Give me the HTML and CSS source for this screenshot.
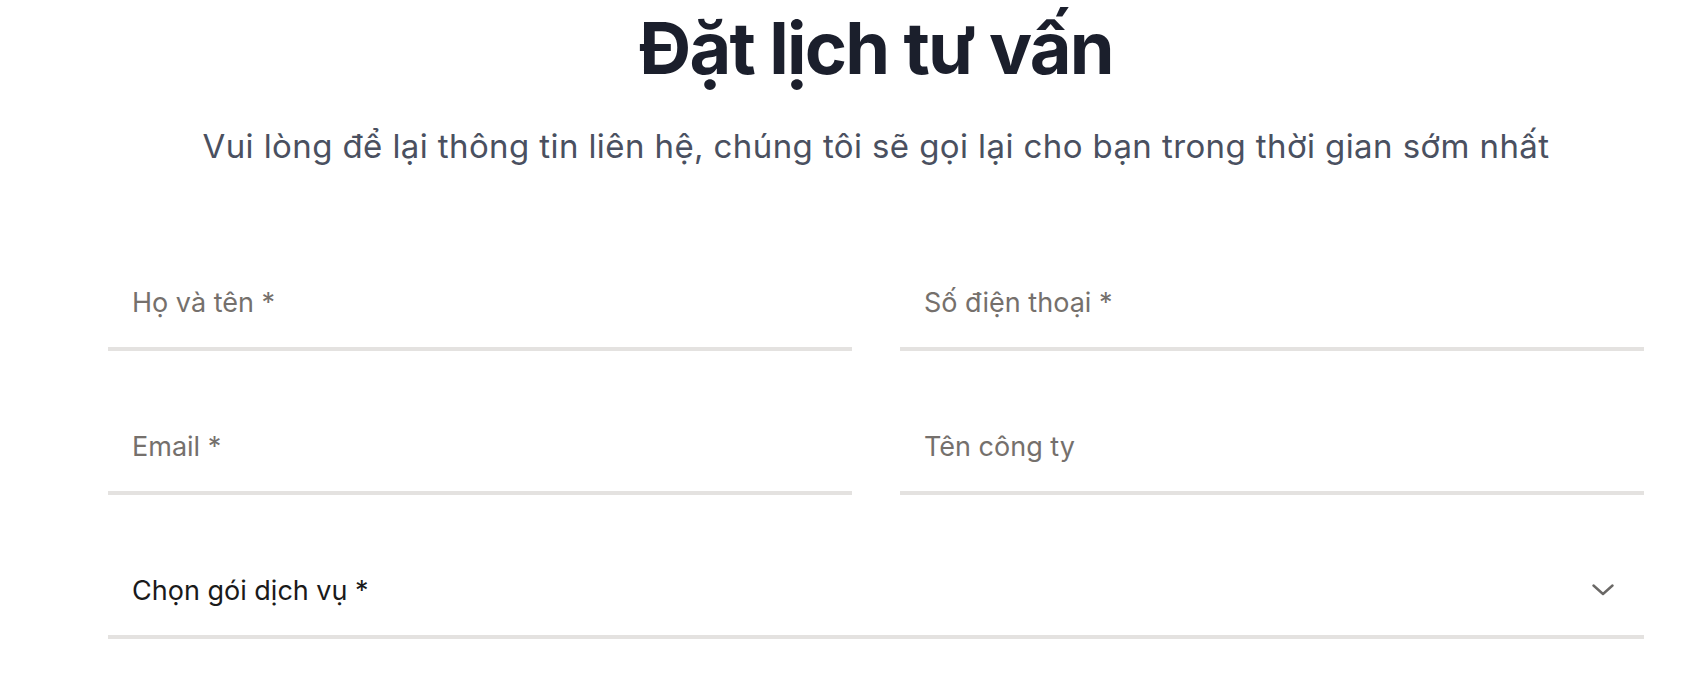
FILE: index.html
```html
<!DOCTYPE html>
<html lang="vi">
<head>
<meta charset="utf-8">
<title>Đặt lịch tư vấn</title>
<link rel="stylesheet" href="styles.css">
</head>
<body>
<main class="section">
  <h1 class="title">Đặt lịch tư vấn</h1>
  <p class="subtitle">Vui lòng để lại thông tin liên hệ, chúng tôi sẽ gọi lại cho bạn trong thời gian sớm nhất</p>
  <form class="form">
    <input class="field" type="text" placeholder="Họ và tên *">
    <input class="field" type="tel" placeholder="Số điện thoại *">
    <input class="field" type="email" placeholder="Email *">
    <input class="field" type="text" placeholder="Tên công ty">
    <div class="select-wrap">
      <select class="select">
        <option>Chọn gói dịch vụ *</option>
      </select>
      <svg class="chevron" width="22" height="12" viewBox="0 0 22 12" fill="none">
        <path d="M1.5 1.5 L11 10 L20.5 1.5" stroke="#6a6866" stroke-width="2.4" stroke-linecap="round" stroke-linejoin="round"/>
      </svg>
    </div>
  </form>
</main>
</body>
</html>
```
FILE: styles.css
```css
* { box-sizing: border-box; }
html, body { margin: 0; padding: 0; background: #ffffff; }
body {
  font-family: Inter, "Noto Sans", "Liberation Sans", sans-serif;
}
.section {
  margin-left: 108px;
  width: 1536px;
  padding-top: 5px;
  display: flex;
  flex-direction: column;
  align-items: center;
}
.title {
  margin: 0;
  font-size: 72px;
  line-height: 1.2;
  font-weight: 700;
  color: #1b1f2c;
  letter-spacing: -1.8px;
}
.subtitle {
  margin: 31px 0 0;
  font-size: 33px;
  line-height: 48px;
  font-weight: 400;
  color: #4a5060;
  letter-spacing: 0.4px;
}
.form {
  margin-top: 87px;
  width: 100%;
  display: grid;
  grid-template-columns: 1fr 1fr;
  column-gap: 48px;
  row-gap: 50px;
}
.field, .select-wrap {
  height: 94px;
  border: none;
  border-bottom: 4px solid #e4e2e0;
  background: transparent;
  padding: 0 24px;
  font-family: inherit;
  font-size: 27px;
  color: #1a1a1a;
  outline: none;
  width: 100%;
}
.field::placeholder { color: #75706c; opacity: 1; }
.select-wrap {
  grid-column: 1 / -1;
  display: flex;
  align-items: center;
  padding-right: 30px;
}
.select {
  flex: 1;
  appearance: none;
  -webkit-appearance: none;
  border: none;
  background: transparent;
  font-family: inherit;
  font-size: 27px;
  color: #1a1a1a;
  padding: 0;
  outline: none;
}
.chevron { flex: none; }
```
